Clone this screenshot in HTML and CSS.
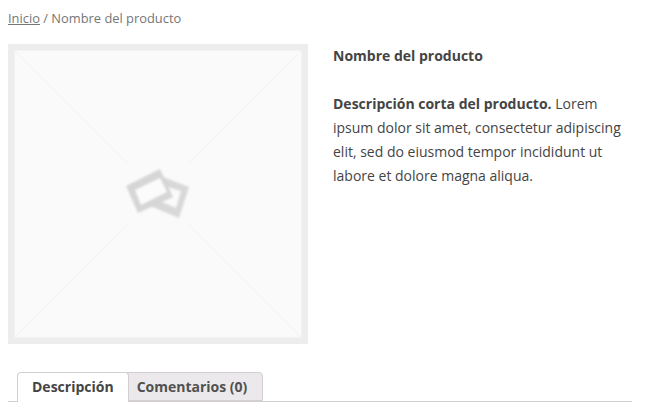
FILE: index.html
```html
<!DOCTYPE html>
<html lang="es">

<head>
    <meta charset="UTF-8">
    <meta name="viewport" content="width=device-width, initial-scale=1.0">
    <title>Nombre del producto</title>
    <link rel="stylesheet" href="styles.css">
</head>

<body>
    <nav class="breadcrumb"><a href="#">Inicio</a> / Nombre del producto</nav>

    <div class="product">
        <div class="product-image">
            <svg class="placeholder" viewBox="0 0 300 300" width="300" height="300">
                <defs>
                    <filter id="soft" x="-20%" y="-20%" width="140%" height="140%">
                        <feGaussianBlur stdDeviation="1"></feGaussianBlur>
                    </filter>
                </defs>
                <rect width="300" height="300" fill="#ededed"></rect>
                <rect x="6.5" y="6.5" width="287" height="287" fill="#fafafa"></rect>
                <path d="M7 7 L119 119 M293 7 L181 119 M7 293 L119 181 M293 293 L181 181" stroke="#f4f4f4" stroke-width="1.2" fill="none"></path>
                <g filter="url(#soft)">
                    <!-- photo behind -->
                    <path fill="#d8d8d8" fill-rule="evenodd" d="M150 131 L181 143 L171 174 L140 161 Z M160 143 L173 147 L168 164 L154 158 Z"></path>
                    <!-- photo in front -->
                    <path fill="#d6d6d6" d="M118 142 L152 125 L165 153 L130 169 Z"></path>
                    <path fill="#fbfbfb" d="M127 146 L152 134 L159 148 L133 161 Z"></path>
                </g>
            </svg>
        </div>

        <div class="product-summary">
            <h1 class="product-title">Nombre del producto</h1>
            <p class="product-desc"><strong>Descripción corta del producto.</strong> Lorem ipsum dolor sit amet, consectetur adipiscing elit, sed do eiusmod tempor incididunt ut labore et dolore magna aliqua.</p>
        </div>
    </div>

    <ul class="tabs">
        <li class="tab active"><a href="#">Descripción</a></li>
        <li class="tab"><a href="#">Comentarios (0)</a></li>
    </ul>
</body>

</html>
```

FILE: styles.css
```css
body {
    font-family: "Open Sans", sans-serif;
    font-size: 14px;
    line-height: 24px;
    color: #444;
    margin: 0;
    padding: 8px 17px 0 8px;
    background-color: #fff;
}

a {
    color: inherit;
}

.breadcrumb {
    font-size: 12.88px;
    line-height: 20px;
    color: #767676;
}

.product {
    display: flex;
    gap: 25px;
    margin-top: 16px;
}

.product-image {
    width: 300px;
    height: 300px;
    flex-shrink: 0;
}

.placeholder {
    display: block;
}

.product-summary {
    width: 299px;
}

.product-title {
    font-size: 14px;
    font-weight: 700;
    line-height: 24px;
    margin: 0 0 24px;
}

.product-desc {
    margin: 0;
}

.tabs {
    display: flex;
    list-style: none;
    margin: 28px 0 0;
    padding: 0 0 0 9px;
    height: 29px;
    border-bottom: 1px solid #d3ced2;
}

.tab {
    height: 29px;
    border: 1px solid #d3ced2;
    border-radius: 4px 4px 0 0;
    background-color: #ebe9eb;
    margin-left: -5px;
    box-sizing: border-box;
}

.tab:first-child {
    margin-left: 0;
}

.tab a {
    display: block;
    padding: 0 15px 0 12px;
    font-size: 14px;
    font-weight: 700;
    line-height: 27px;
    color: #515151;
    text-decoration: none;
}

.tab.active {
    height: 30px;
    background-color: #fff;
    border-bottom: none;
    position: relative;
    z-index: 1;
}

.tab.active a {
    padding: 0 14px;
    color: #444;
}
```
